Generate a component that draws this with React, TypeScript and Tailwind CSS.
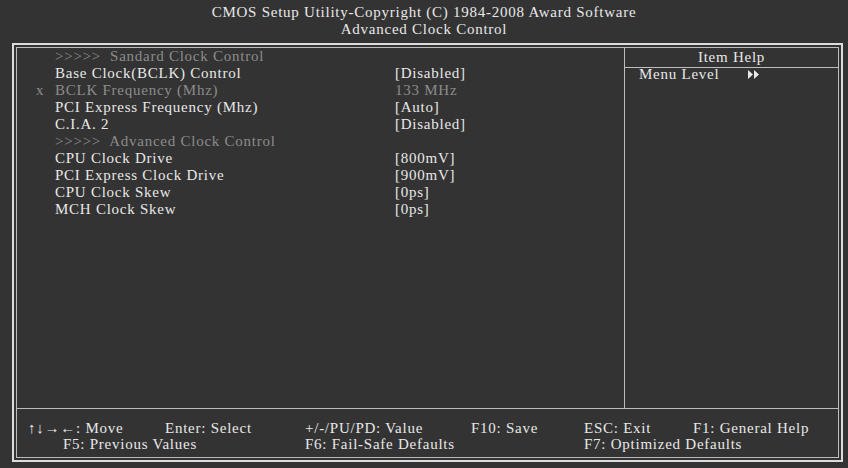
const rows = [
  { label: ">>>>> Sandard Clock Control", value: "", dim: true },
  { label: "Base Clock(BCLK) Control", value: "[Disabled]" },
  { label: "BCLK Frequency (Mhz)", value: "133 MHz", dim: true, mark: "x" },
  { label: "PCI Express Frequency (Mhz)", value: "[Auto]" },
  { label: "C.I.A. 2", value: "[Disabled]" },
  { label: ">>>>> Advanced Clock Control", value: "", dim: true },
  { label: "CPU Clock Drive", value: "[800mV]" },
  { label: "PCI Express Clock Drive", value: "[900mV]" },
  { label: "CPU Clock Skew", value: "[0ps]" },
  { label: "MCH Clock Skew", value: "[0ps]" },
];

function Arrows() {
  return (
    <svg width="11" height="9" viewBox="0 0 11 9">
      <path d="M0 0 L5 4.5 L0 9 Z M6 0 L11 4.5 L6 9 Z" fill="#e8e8e8" />
    </svg>
  );
}

export default function App() {
  return (
    <div
      className="w-[848px] h-[468px] bg-[#333333] text-[#e8e8e8] text-[15px] tracking-[0.75px] overflow-hidden"
      style={{ fontFamily: '"Liberation Serif", "Times New Roman", serif' }}
    >
      <div className="h-[43px] pt-[4px] text-center leading-[17px]">
        <div>CMOS Setup Utility-Copyright (C) 1984-2008 Award Software</div>
        <div>Advanced Clock Control</div>
      </div>

      <div className="ml-[12px] w-[831px] h-[419px] border-2 border-[#dcdcdc] p-[2px]">
        <div className="h-full border border-[#bdbdbd] flex flex-col">
          <div className="flex h-[361px] border-b border-[#bdbdbd]">
            <div className="w-[607px] leading-[17px]">
              {rows.map((r, i) => (
                <div key={i} className={"flex h-[17px] items-center " + (r.dim ? "text-[#8c8c8c]" : "")}>
                  <span className="w-[38px] pl-[19px]">{r.mark ?? ""}</span>
                  <span className="w-[340px] whitespace-pre">{r.label.replace(">>>>> ", ">>>>>  ")}</span>
                  <span>{r.value}</span>
                </div>
              ))}
            </div>
            <div className="flex-1 border-l border-[#bdbdbd] flex flex-col">
              <div className="h-[20px] border-b border-[#bdbdbd] text-center leading-[18px]">Item Help</div>
              <div className="flex items-center pl-[14px] h-[15px] mt-[-1px]">
                <span className="w-[109px]">Menu Level</span>
                <Arrows />
              </div>
            </div>
          </div>
          <div className="flex-1 pt-[11px] leading-[16px]">
            <div className="flex">
              <span className="w-[148px] pl-[11px]">↑↓→←: Move</span>
              <span className="w-[140px]">Enter: Select</span>
              <span className="w-[166px]">+/-/PU/PD: Value</span>
              <span className="w-[113px]">F10: Save</span>
              <span className="w-[109px]">ESC: Exit</span>
              <span>F1: General Help</span>
            </div>
            <div className="flex">
              <span className="w-[288px] pl-[46px]">F5: Previous Values</span>
              <span className="w-[279px]">F6: Fail-Safe Defaults</span>
              <span>F7: Optimized Defaults</span>
            </div>
          </div>
        </div>
      </div>
    </div>
  );
}
